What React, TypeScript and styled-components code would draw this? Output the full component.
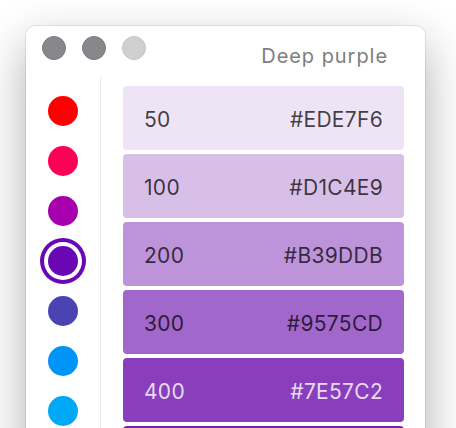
import React from "react";
import styled, { createGlobalStyle } from "styled-components";

const Global = createGlobalStyle`
  html, body { margin: 0; padding: 0; background: #ffffff; overflow: hidden; }
  body { font-family: Inter, "Liberation Sans", Arial, sans-serif; }
  #root { width: 456px; height: 428px; overflow: hidden; }
`;

const Stage = styled.div`
  padding: 26px 0 0 26px;
  width: 456px;
  height: 428px;
  box-sizing: border-box;
`;

const Window = styled.div`
  width: 399px;
  height: 520px;
  background: #ffffff;
  border-radius: 9px;
  box-shadow: 0 0 0 1px rgba(0, 0, 0, 0.08), 0 18px 48px rgba(0, 0, 0, 0.32);
  display: flex;
  flex-direction: column;
`;

const TitleBar = styled.div`
  height: 51px;
  display: flex;
  align-items: flex-start;
  padding: 10px 37px 0 16px;
  box-sizing: border-box;
`;

const Lights = styled.div`
  display: flex;
  gap: 16px;
  flex: 1;
`;

const Light = styled.span<{ $dim?: boolean }>`
  width: 24px;
  height: 24px;
  border-radius: 50%;
  box-sizing: border-box;
  background: ${(p) => (p.$dim ? "#d0d0d0" : "#88878b")};
  border: 1px solid ${(p) => (p.$dim ? "#c4c4c4" : "#7a797d")};
`;

const Title = styled.div`
  font-size: 20px;
  letter-spacing: 0.95px;
  color: #7e7e7e;
  line-height: 23px;
  margin-top: 9px;
`;

const Body = styled.div`
  display: flex;
  flex: 1;
`;

const Sidebar = styled.div`
  width: 74px;
  border-right: 1px solid #e9e9e9;
  display: flex;
  flex-direction: column;
  align-items: center;
  padding-top: 19px;
  gap: 20px;
`;

const Dot = styled.span<{ $color: string; $selected?: boolean }>`
  width: 30px;
  height: 30px;
  border-radius: 50%;
  flex: none;
  background: ${(p) => p.$color};
  box-shadow: ${(p) =>
    p.$selected ? `0 0 0 4px #ffffff, 0 0 0 8px ${p.$color}` : "none"};
`;

const Content = styled.div`
  flex: 1;
  padding: 9px 21px 0 22px;
  display: flex;
  flex-direction: column;
  gap: 4px;
`;

const Swatch = styled.div<{ $bg: string; $light?: boolean }>`
  height: 64px;
  flex: none;
  border-radius: 4px;
  background: ${(p) => p.$bg};
  color: ${(p) => (p.$light ? "rgba(255,255,255,0.82)" : "rgba(0,0,0,0.74)")};
  display: flex;
  align-items: center;
  justify-content: space-between;
  padding: 3px 21px 0 21px;
  box-sizing: border-box;
  font-size: 21px;
  letter-spacing: 0.3px;
`;

const dots = [
  { c: "#fe0000" },
  { c: "#ff0055" },
  { c: "#a600ae" },
  { c: "#6a07b5", sel: true },
  { c: "#4a43b1" },
  { c: "#0094f6" },
  { c: "#00a9f6" },
  { c: "#00bcd4" },
];

const shades = [
  { n: "50", hex: "#EDE7F6", bg: "#efe3f6" },
  { n: "100", hex: "#D1C4E9", bg: "#d7bfe8" },
  { n: "200", hex: "#B39DDB", bg: "#bd93da" },
  { n: "300", hex: "#9575CD", bg: "#a167cb" },
  { n: "400", hex: "#7E57C2", bg: "#893ebd", light: true },
  { n: "500", hex: "#673AB7", bg: "#7422ae", light: true },
];

export default function App() {
  return (
    <>
      <Global />
      <Stage>
        <Window>
          <TitleBar>
            <Lights>
              <Light />
              <Light />
              <Light $dim />
            </Lights>
            <Title>Deep purple</Title>
          </TitleBar>
          <Body>
            <Sidebar>
              {dots.map((d, i) => (
                <Dot key={i} $color={d.c} $selected={d.sel} />
              ))}
            </Sidebar>
            <Content>
              {shades.map((s) => (
                <Swatch key={s.n} $bg={s.bg} $light={s.light}>
                  <span>{s.n}</span>
                  <span>{s.hex}</span>
                </Swatch>
              ))}
            </Content>
          </Body>
        </Window>
      </Stage>
    </>
  );
}
